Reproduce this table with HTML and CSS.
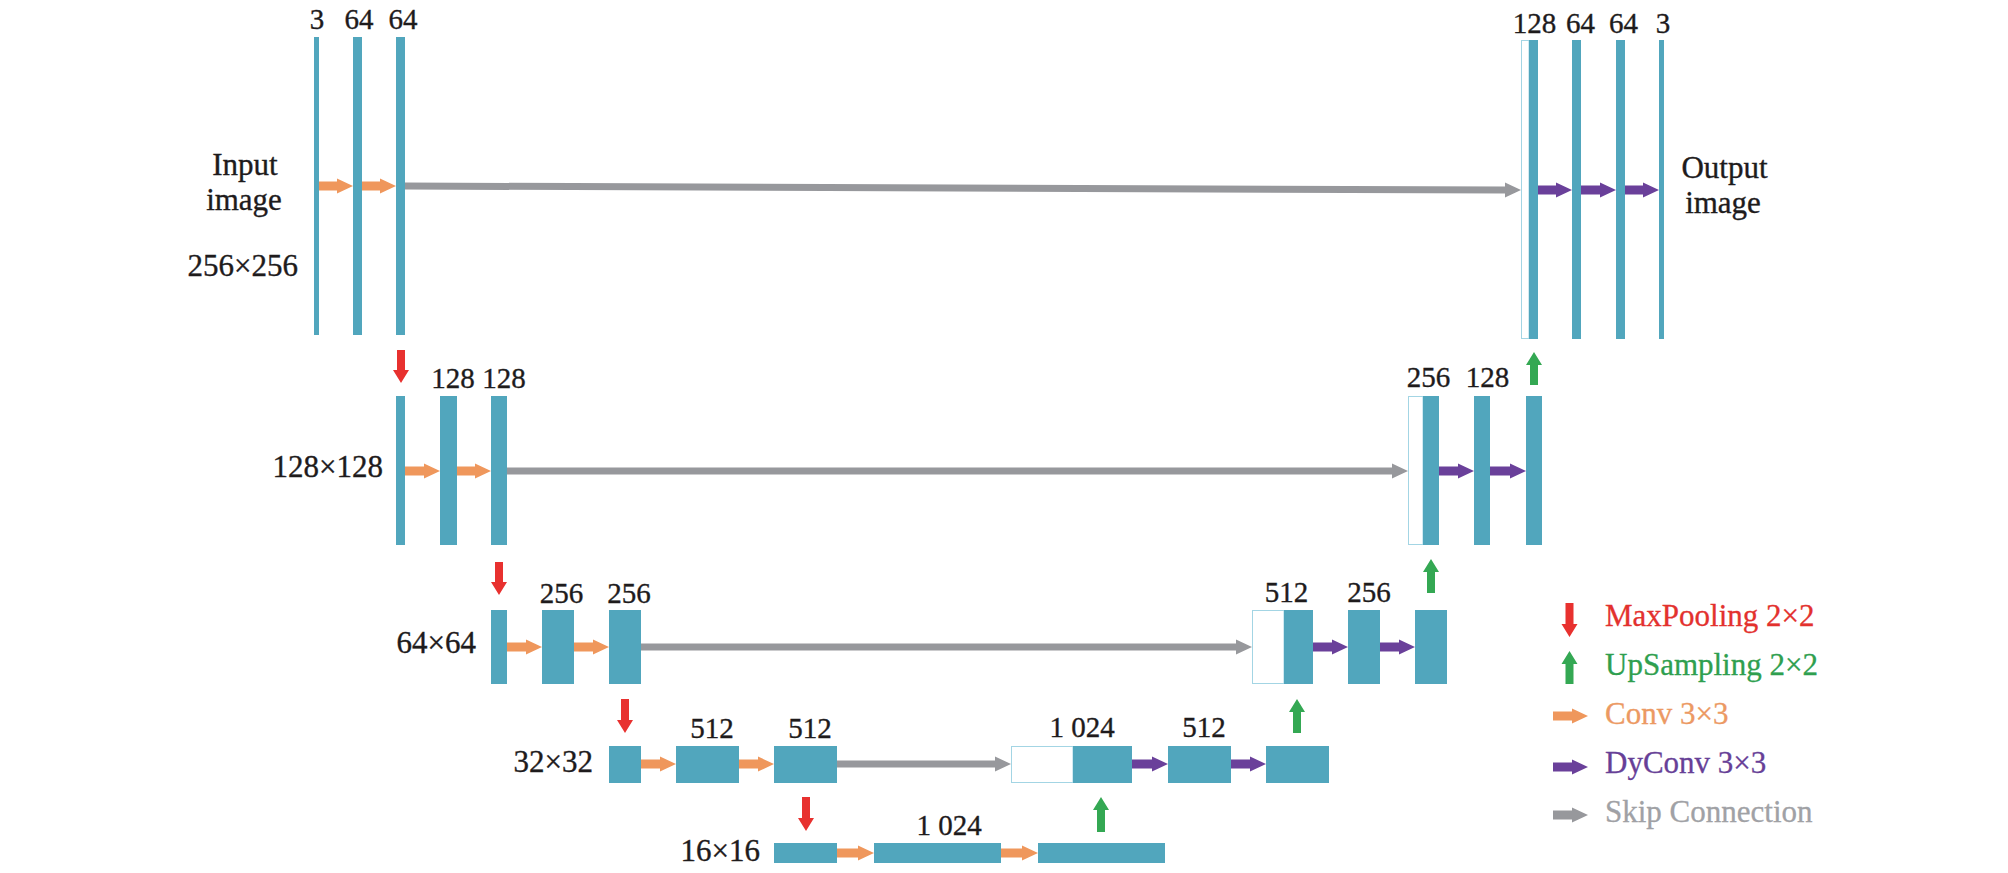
FILE: index.html
```html
<!DOCTYPE html>
<html lang="en">
<head>
<meta charset="utf-8">
<title>U-Net with DyConv</title>
<link rel="stylesheet" href="styles.css">
</head>
<body>
<div class="figure">
  <svg class="diagram" width="2008" height="873" viewBox="0 0 2008 873" xmlns="http://www.w3.org/2000/svg">
    <!-- Row 1: 256x256 -->
    <g class="level">
      <rect class="teal" x="314" y="37" width="5" height="298"/>
      <rect class="teal" x="353" y="37" width="9" height="298"/>
      <rect class="teal" x="396" y="37" width="9" height="298"/>
      <rect class="hollow" x="1521.5" y="40.5" width="7.5" height="298"/>
      <rect class="teal" x="1529" y="40" width="9" height="299"/>
      <rect class="teal" x="1572" y="40" width="9" height="299"/>
      <rect class="teal" x="1616" y="40" width="9" height="299"/>
      <rect class="teal" x="1659" y="40" width="5" height="299"/>
      <polygon class="conv" points="319,181.5 337,181.5 337,178.5 353,186 337,193.5 337,190.5 319,190.5"/>
      <polygon class="conv" points="362,181.5 380,181.5 380,178.5 396,186 380,193.5 380,190.5 362,190.5"/>
      <polygon class="skip" points="405,182.5 1505,186.5 1505,182.5 1521,190 1505,197.5 1505,193.5 405,189.5"/>
      <polygon class="dyconv" points="1538,185.5 1556,185.5 1556,182.5 1572,190 1556,197.5 1556,194.5 1538,194.5"/>
      <polygon class="dyconv" points="1581,185.5 1600,185.5 1600,182.5 1616,190 1600,197.5 1600,194.5 1581,194.5"/>
      <polygon class="dyconv" points="1625,185.5 1643,185.5 1643,182.5 1659,190 1643,197.5 1643,194.5 1625,194.5"/>
      <text class="num" x="317" y="29">3</text>
      <text class="num" x="359" y="29">64</text>
      <text class="num" x="403" y="29">64</text>
      <text class="num" x="1534.5" y="33">128</text>
      <text class="num" x="1580.5" y="33">64</text>
      <text class="num" x="1623.5" y="33">64</text>
      <text class="num" x="1663" y="33">3</text>
      <text class="label mid" x="245" y="175">Input</text>
      <text class="label mid" x="244" y="210">image</text>
      <text class="label end" x="298" y="276">256×256</text>
      <text class="label mid" x="1724.5" y="178">Output</text>
      <text class="label mid" x="1723" y="213">image</text>
    </g>

    <!-- Row 2: 128x128 -->
    <g class="level">
      <polygon class="pool" points="397,350 405,350 405,370 409,370 401,383 393,370 397,370"/>
      <polygon class="up" points="1530,385 1538,385 1538,365 1542,365 1534,352 1526,365 1530,365"/>
      <rect class="teal" x="396" y="396" width="9" height="149"/>
      <rect class="teal" x="440" y="396" width="17" height="149"/>
      <rect class="teal" x="491" y="396" width="16" height="149"/>
      <rect class="hollow" x="1408.5" y="396.5" width="14.5" height="148"/>
      <rect class="teal" x="1423" y="396" width="16" height="149"/>
      <rect class="teal" x="1474" y="396" width="16" height="149"/>
      <rect class="teal" x="1526" y="396" width="16" height="149"/>
      <polygon class="conv" points="405,466.5 424,466.5 424,463.5 440,471 424,478.5 424,475.5 405,475.5"/>
      <polygon class="conv" points="457,466.5 475,466.5 475,463.5 491,471 475,478.5 475,475.5 457,475.5"/>
      <polygon class="skip" points="507,467.5 1392,467.5 1392,463.5 1408,471 1392,478.5 1392,474.5 507,474.5"/>
      <polygon class="dyconv" points="1439,466.5 1458,466.5 1458,463.5 1474,471 1458,478.5 1458,475.5 1439,475.5"/>
      <polygon class="dyconv" points="1490,466.5 1510,466.5 1510,463.5 1526,471 1510,478.5 1510,475.5 1490,475.5"/>
      <text class="num" x="453" y="388">128</text>
      <text class="num" x="504" y="388">128</text>
      <text class="num" x="1428.5" y="387">256</text>
      <text class="num" x="1487.5" y="387">128</text>
      <text class="label end" x="383" y="477">128×128</text>
    </g>

    <!-- Row 3: 64x64 -->
    <g class="level">
      <polygon class="pool" points="495,562 503,562 503,582 507,582 499,595 491,582 495,582"/>
      <polygon class="up" points="1427,593 1435,593 1435,572 1439,572 1431,559 1423,572 1427,572"/>
      <rect class="teal" x="491" y="610" width="16" height="74"/>
      <rect class="teal" x="542" y="610" width="32" height="74"/>
      <rect class="teal" x="609" y="610" width="32" height="74"/>
      <rect class="hollow" x="1252.5" y="610.5" width="31.5" height="73"/>
      <rect class="teal" x="1284" y="610" width="29" height="74"/>
      <rect class="teal" x="1348" y="610" width="32" height="74"/>
      <rect class="teal" x="1415" y="610" width="32" height="74"/>
      <polygon class="conv" points="507,642.5 526,642.5 526,639.5 542,647 526,654.5 526,651.5 507,651.5"/>
      <polygon class="conv" points="574,642.5 593,642.5 593,639.5 609,647 593,654.5 593,651.5 574,651.5"/>
      <polygon class="skip" points="641,643.5 1236,643.5 1236,639.5 1252,647 1236,654.5 1236,650.5 641,650.5"/>
      <polygon class="dyconv" points="1313,642.5 1332,642.5 1332,639.5 1348,647 1332,654.5 1332,651.5 1313,651.5"/>
      <polygon class="dyconv" points="1380,642.5 1399,642.5 1399,639.5 1415,647 1399,654.5 1399,651.5 1380,651.5"/>
      <text class="num" x="561.5" y="603">256</text>
      <text class="num" x="629" y="603">256</text>
      <text class="num" x="1286.5" y="602">512</text>
      <text class="num" x="1369" y="602">256</text>
      <text class="label end" x="476" y="653">64×64</text>
    </g>

    <!-- Row 4: 32x32 -->
    <g class="level">
      <polygon class="pool" points="621,699 629,699 629,720 633,720 625,733 617,720 621,720"/>
      <polygon class="up" points="1293,733 1301,733 1301,712 1305,712 1297,699 1289,712 1293,712"/>
      <rect class="teal" x="609" y="746" width="32" height="37"/>
      <rect class="teal" x="676" y="746" width="63" height="37"/>
      <rect class="teal" x="774" y="746" width="63" height="37"/>
      <rect class="hollow" x="1011.5" y="746.5" width="61.5" height="36"/>
      <rect class="teal" x="1073" y="746" width="59" height="37"/>
      <rect class="teal" x="1168" y="746" width="63" height="37"/>
      <rect class="teal" x="1266" y="746" width="63" height="37"/>
      <polygon class="conv" points="641,759.5 660,759.5 660,756.5 676,764 660,771.5 660,768.5 641,768.5"/>
      <polygon class="conv" points="739,759.5 758,759.5 758,756.5 774,764 758,771.5 758,768.5 739,768.5"/>
      <polygon class="skip" points="837,760.5 995,760.5 995,756.5 1011,764 995,771.5 995,767.5 837,767.5"/>
      <polygon class="dyconv" points="1132,759.5 1152,759.5 1152,756.5 1168,764 1152,771.5 1152,768.5 1132,768.5"/>
      <polygon class="dyconv" points="1231,759.5 1250,759.5 1250,756.5 1266,764 1250,771.5 1250,768.5 1231,768.5"/>
      <text class="num" x="712" y="738">512</text>
      <text class="num" x="810" y="738">512</text>
      <text class="num" x="1082" y="737">1 024</text>
      <text class="num" x="1204" y="737">512</text>
      <text class="label end" x="593" y="772">32×32</text>
    </g>

    <!-- Row 5: 16x16 -->
    <g class="level">
      <polygon class="pool" points="802,797 810,797 810,818 814,818 806,831 798,818 802,818"/>
      <polygon class="up" points="1097,832 1105,832 1105,810 1109,810 1101,797 1093,810 1097,810"/>
      <rect class="teal" x="774" y="843" width="63" height="20"/>
      <rect class="teal" x="874" y="843" width="127" height="20"/>
      <rect class="teal" x="1038" y="843" width="127" height="20"/>
      <polygon class="conv" points="837,848.5 858,848.5 858,845.5 874,853 858,860.5 858,857.5 837,857.5"/>
      <polygon class="conv" points="1001,848.5 1022,848.5 1022,845.5 1038,853 1022,860.5 1022,857.5 1001,857.5"/>
      <text class="num" x="949" y="835">1 024</text>
      <text class="label end" x="760" y="861">16×16</text>
    </g>
  </svg>

  <ul class="legend">
    <li class="legend-item pool-text">
      <svg class="legend-icon" width="35" height="49" viewBox="0 0 35 49"><polygon class="pool" points="12.5,12 20.5,12 20.5,33 24.5,33 16.5,46 8.5,33 12.5,33"/></svg>
      <span>MaxPooling 2×2</span>
    </li>
    <li class="legend-item up-text">
      <svg class="legend-icon" width="35" height="49" viewBox="0 0 35 49"><polygon class="up" points="12.5,44 20.5,44 20.5,24 24.5,24 16.5,11 8.5,24 12.5,24"/></svg>
      <span>UpSampling 2×2</span>
    </li>
    <li class="legend-item conv-text">
      <svg class="legend-icon" width="35" height="49" viewBox="0 0 35 49"><polygon class="conv" points="0,22.5 19,22.5 19,19.5 35,27 19,34.5 19,31.5 0,31.5"/></svg>
      <span>Conv 3×3</span>
    </li>
    <li class="legend-item dyconv-text">
      <svg class="legend-icon" width="35" height="49" viewBox="0 0 35 49"><polygon class="dyconv" points="0,24.5 19,24.5 19,21.5 35,29 19,36.5 19,33.5 0,33.5"/></svg>
      <span>DyConv 3×3</span>
    </li>
    <li class="legend-item skip-text">
      <svg class="legend-icon" width="35" height="49" viewBox="0 0 35 49"><polygon class="skip" points="0,23.5 19,23.5 19,20.5 35,28 19,35.5 19,32.5 0,32.5"/></svg>
      <span>Skip Connection</span>
    </li>
  </ul>
</div>
</body>
</html>
```

FILE: styles.css
```css
html, body {
  margin: 0;
  padding: 0;
  background: #ffffff;
}

.figure {
  position: relative;
  width: 2008px;
  height: 873px;
  overflow: hidden;
  font-family: "Liberation Serif", "Times New Roman", serif;
}

.diagram {
  display: block;
}

.teal { fill: #51a6bd; }
.hollow { fill: #ffffff; stroke: #a3d5e4; stroke-width: 1; }
.conv { fill: #ef975c; }
.dyconv { fill: #6a409a; }
.skip { fill: #97989c; }
.pool { fill: #e8312f; }
.up { fill: #34a853; }

.num,
.label {
  font-family: "Liberation Serif", "Times New Roman", serif;
  fill: #1e1b1c;
  stroke: #1e1b1c;
  stroke-width: 0.35px;
}

.num {
  font-size: 29px;
  text-anchor: middle;
}

.label {
  font-size: 31px;
}

.mid { text-anchor: middle; }
.end { text-anchor: end; }

.legend {
  position: absolute;
  left: 1553px;
  top: 591px;
  margin: 0;
  padding: 0;
  list-style: none;
  display: flex;
  flex-direction: column;
}

.legend-item {
  display: flex;
  align-items: flex-start;
  gap: 17px;
  height: 49px;
  line-height: 49px;
  font-size: 31px;
  white-space: nowrap;
  -webkit-text-stroke: 0.3px currentColor;
}

.legend-icon {
  display: block;
  flex: none;
}

.pool-text { color: #e3312e; }
.up-text { color: #2f9f4f; }
.conv-text { color: #ec9963; }
.dyconv-text { color: #673f97; }
.skip-text { color: #a0a1a5; }
```
